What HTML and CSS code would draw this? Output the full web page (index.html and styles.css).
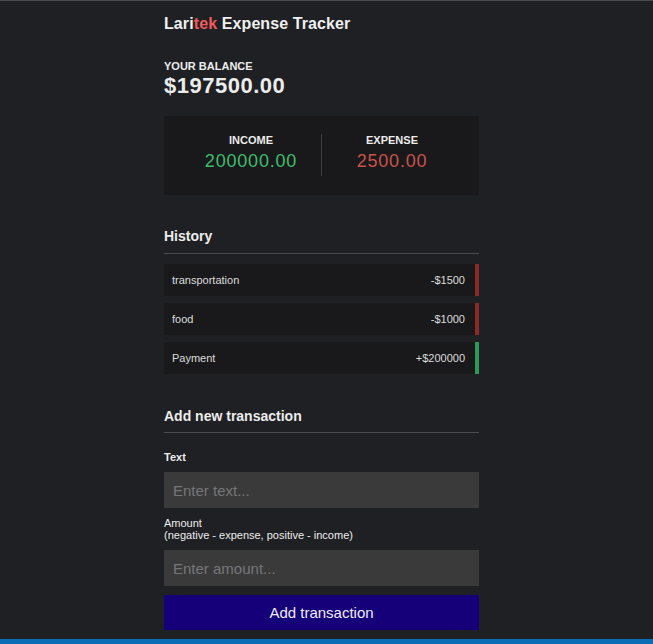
FILE: index.html
```html
<!DOCTYPE html>
<html>
<head>
<meta charset="utf-8">
<link rel="stylesheet" href="styles.css">
</head>
<body>
<div class="topline"></div>
<div class="container">
  <h2 class="title">Lari<span class="accent">tek</span> Expense Tracker</h2>
  <div class="balance">
    <h4 class="balance-label">YOUR BALANCE</h4>
    <h1 class="balance-value">$197500.00</h1>
  </div>
  <div class="inc-exp">
    <div class="col">
      <h4 class="col-label">INCOME</h4>
      <p class="money plus">200000.00</p>
    </div>
    <div class="col">
      <h4 class="col-label">EXPENSE</h4>
      <p class="money minus">2500.00</p>
    </div>
  </div>
  <h3 class="section">History</h3>
  <ul class="list">
    <li class="item minus-item"><span>transportation</span><span>-$1500</span></li>
    <li class="item minus-item"><span>food</span><span>-$1000</span></li>
    <li class="item plus-item"><span>Payment</span><span>+$200000</span></li>
  </ul>
  <h3 class="section">Add new transaction</h3>
  <form class="form">
    <div class="field">
      <label class="label label-bold">Text</label>
      <input class="input" type="text" placeholder="Enter text...">
    </div>
    <div class="field">
      <label class="label">Amount <br>(negative - expense, positive - income)</label>
      <input class="input" type="text" placeholder="Enter amount...">
    </div>
    <button class="btn" type="button">Add transaction</button>
  </form>
</div>
<div class="statusbar"></div>
</body>
</html>
```
FILE: styles.css
```css
* { box-sizing: border-box; }
html, body { margin: 0; padding: 0; }
body {
  background: #1f2023;
  color: #ececec;
  font-family: "Liberation Sans", Arial, sans-serif;
  display: flex;
  flex-direction: column;
  align-items: center;
  min-height: 644px;
  overflow: hidden;
}
.topline {
  align-self: stretch;
  height: 1px;
  background: #4b4c4f;
}
.container {
  width: 315px;
  margin-right: 10px;
  display: flex;
  flex-direction: column;
}
.title {
  margin: 14px 0 0;
  font-size: 16px;
  font-weight: bold;
  line-height: 18px;
  color: #f0f0f0;
  letter-spacing: 0.1px;
}
.accent { color: #ef5a5f; }
.balance { margin-top: 27px; }
.balance-label {
  margin: 0;
  font-size: 11px;
  line-height: 12px;
  font-weight: bold;
}
.balance-value {
  margin: 2px 0 0;
  font-size: 22px;
  line-height: 24px;
  font-weight: bold;
  letter-spacing: 0.5px;
}
.inc-exp {
  margin-top: 18px;
  background: #19191b;
  height: 79px;
  padding: 0 17px 2px;
  display: flex;
  align-items: center;
}
.col {
  flex: 1;
  text-align: center;
  height: 42px;
  display: flex;
  flex-direction: column;
  align-items: center;
  justify-content: flex-start;
}
.col:first-child { border-right: 1px solid #3c3d40; }
.col-label {
  margin: 0;
  font-size: 11px;
  line-height: 12px;
  font-weight: bold;
}
.money {
  margin: 5px 0 0;
  font-size: 18px;
  line-height: 20px;
  letter-spacing: 0.8px;
}
.plus { color: #3ebd6c; }
.minus { color: #c9534c; }
.section {
  margin: 33px 0 0;
  font-size: 14px;
  line-height: 16px;
  font-weight: bold;
  padding-bottom: 9px;
  border-bottom: 1px solid #4a4b4e;
}
.list {
  list-style: none;
  margin: 10px 0 0;
  padding: 0;
  display: flex;
  flex-direction: column;
  gap: 7px;
}
.item {
  height: 32px;
  background: #19191b;
  display: flex;
  justify-content: space-between;
  align-items: center;
  padding: 0 10px 0 8px;
  font-size: 11px;
  color: #dcdcdc;
}
.minus-item { border-right: 4px solid #8c2a26; }
.plus-item { border-right: 4px solid #2b9a55; }
.list + .section { margin-top: 34px; padding-bottom: 8px; }
.form {
  display: flex;
  flex-direction: column;
  margin-top: 18px;
}
.field { display: flex; flex-direction: column; }
.field + .field { margin-top: 9px; }
.label {
  font-size: 11px;
  line-height: 12px;
  font-weight: normal;
  color: #ececec;
}
.label-bold { font-weight: bold; }
.input {
  margin-top: 9px;
  height: 36px;
  background: #3a3a3b;
  border: none;
  outline: none;
  padding: 0 9px;
  font-family: "Liberation Sans", Arial, sans-serif;
  font-size: 15px;
  color: #ddd;
}
.input::placeholder { color: #767678; }
.btn {
  margin-top: 9px;
  height: 35px;
  background: #15007a;
  color: #ececf5;
  border: none;
  font-family: "Liberation Sans", Arial, sans-serif;
  font-size: 15px;
}
.statusbar {
  position: fixed;
  left: 0;
  right: 0;
  bottom: 0;
  height: 5px;
  background: #0b6db5;
}
```
